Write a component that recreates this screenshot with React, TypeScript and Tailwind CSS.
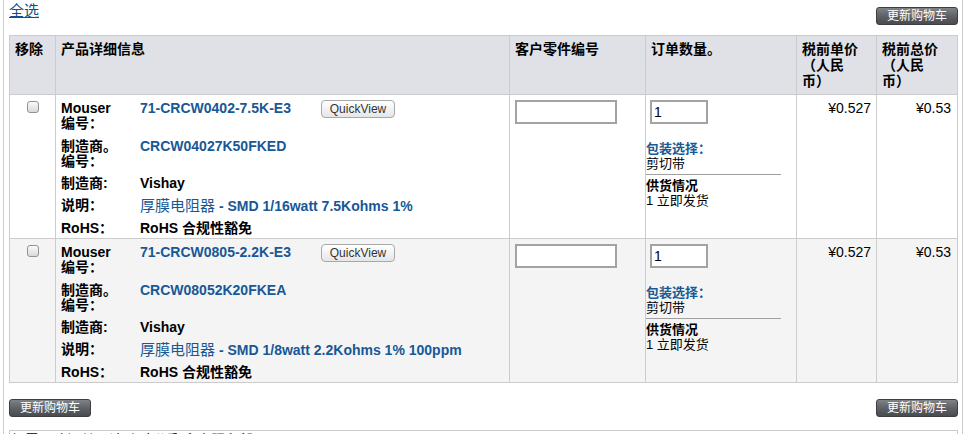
import React from "react";

type Part = {
  mouser: string;
  mfr: string;
  desc: string;
  bg: string;
};

const parts: Part[] = [
  {
    mouser: "71-CRCW0402-7.5K-E3",
    mfr: "CRCW04027K50FKED",
    desc: " - SMD 1/16watt 7.5Kohms 1%",
    bg: "bg-white",
  },
  {
    mouser: "71-CRCW0805-2.2K-E3",
    mfr: "CRCW08052K20FKEA",
    desc: " - SMD 1/8watt 2.2Kohms 1% 100ppm",
    bg: "bg-[#f4f4f4]",
  },
];

function UpdateButton() {
  return (
    <button className="h-[18px] w-[82px] rounded-[3px] border border-[#3c3e41] bg-gradient-to-b from-[#808386] via-[#5f6266] to-[#484b4f] text-[12px] leading-[16px] text-white">
      更新购物车
    </button>
  );
}

function Checkbox() {
  return (
    <span className="block h-[12px] w-[12px] rounded-[3px] border border-[#929292] bg-gradient-to-b from-[#fbfbfb] to-[#d9d9d9]" />
  );
}

function PartRow({ part }: { part: Part }) {
  const cell = `${part.bg} h-[144px] border-r border-b border-[#cccccc]`;
  return (
    <>
      <div className={`${cell} flex justify-center pt-[6px]`}>
        <Checkbox />
      </div>

      {/* product details */}
      <div className={`${cell} pl-[5px] pt-[6px]`}>
        <div className="grid grid-cols-[79px_1fr] gap-y-[7px] text-[14px] font-bold leading-[15px]">
          <div className="min-h-[31px]">
            Mouser
            <br />
            编号：
          </div>
          <div className="flex items-start">
            <span className="inline-block w-[181px] text-[#175896]">{part.mouser}</span>
            <button className="-mt-[1px] h-[18px] w-[74px] rounded-[4px] border border-[#a8a8a8] bg-gradient-to-b from-white to-[#e6e6e6] text-[12px] font-normal leading-[16px] text-[#333333]">
              QuickView
            </button>
          </div>

          <div>
            制造商。
            <br />
            编号：
          </div>
          <div className="text-[#175896]">{part.mfr}</div>

          <div>制造商:</div>
          <div>Vishay</div>

          <div>说明：</div>
          <div className="whitespace-nowrap text-[#175896]">
            <span className="text-[15px] font-normal">厚膜电阻器</span>
            {part.desc}
          </div>

          <div>RoHS：</div>
          <div>RoHS 合规性豁免</div>
        </div>
      </div>

      {/* customer part number */}
      <div className={`${cell} pl-[5px] pt-[5px]`}>
        <input
          className="block h-[24px] w-[102px] border-2 border-[#a3a3a3] bg-white px-1 text-[14px] outline-none"
          defaultValue=""
        />
      </div>

      {/* quantity */}
      <div className={`${cell} pl-[4px] pt-[5px]`}>
        <input
          className="block h-[24px] w-[58px] border-2 border-[#a3a3a3] bg-white px-[2px] text-[14px] outline-none"
          defaultValue="1"
        />
        <div className="-ml-[4px] mt-[17px] text-[13px] leading-[15px]">
          <div className="font-bold text-[#165a96]">包装选择：</div>
          <div>剪切带</div>
          <div className="mt-[3px] w-[135px] border-t border-[#a0a0a0] pt-[3px]">
            <div className="font-bold">供货情况</div>
            <div>1 立即发货</div>
          </div>
        </div>
      </div>

      <div className={`${cell} pr-[5px] pt-[6px] text-right text-[14px] leading-[15px]`}>¥0.527</div>
      <div className={`${cell} pr-[6px] pt-[6px] text-right text-[14px] leading-[15px]`}>¥0.53</div>
    </>
  );
}

export default function App() {
  const head = "h-[59px] bg-[#dfe1e6] border-r border-b border-[#cccccc] px-[5px] pt-[5px] text-[14px] font-bold leading-[16px]";
  return (
    <div className="h-[434px] w-[966px] overflow-hidden bg-white font-['Liberation_Sans','Noto_Sans_CJK_SC',sans-serif] text-black">
      <div className="ml-[3px] min-h-[434px] w-[960px] border-x border-[#cccccc] pl-[5px] pr-[4px]">
        {/* top bar */}
        <div className="flex h-[35px] items-start justify-between">
          <a className="mt-[2px] text-[15px] leading-[18px] text-[#0f4f8c] underline">全选</a>
          <div className="mt-[3px]">
            <UpdateButton />
          </div>
        </div>

        {/* cart table */}
        <div className="grid w-[949px] grid-cols-[46px_454px_136px_151px_80px_81px] border-l border-t border-[#cccccc]">
          <div className={head}>移除</div>
          <div className={head}>产品详细信息</div>
          <div className={head}>客户零件编号</div>
          <div className={head}>订单数量。</div>
          <div className={head}>
            税前单价
            <br />
            （人民
            <br />
            币）
          </div>
          <div className={head}>
            税前总价
            <br />
            （人民
            <br />
            币）
          </div>
          {parts.map((p) => (
            <PartRow key={p.mouser} part={p} />
          ))}
        </div>

        <div className="mt-[16px] flex justify-between">
          <UpdateButton />
          <UpdateButton />
        </div>

        <div className="mt-[13px] h-[24px] w-[949px] border-x border-t border-[#cccccc] pl-[1px] pt-[1px] text-[14px] leading-[16px]">
          如需更改订单，请随时联系 <span className="font-bold text-[#175896]">客户服务部</span>
        </div>
      </div>
    </div>
  );
}
